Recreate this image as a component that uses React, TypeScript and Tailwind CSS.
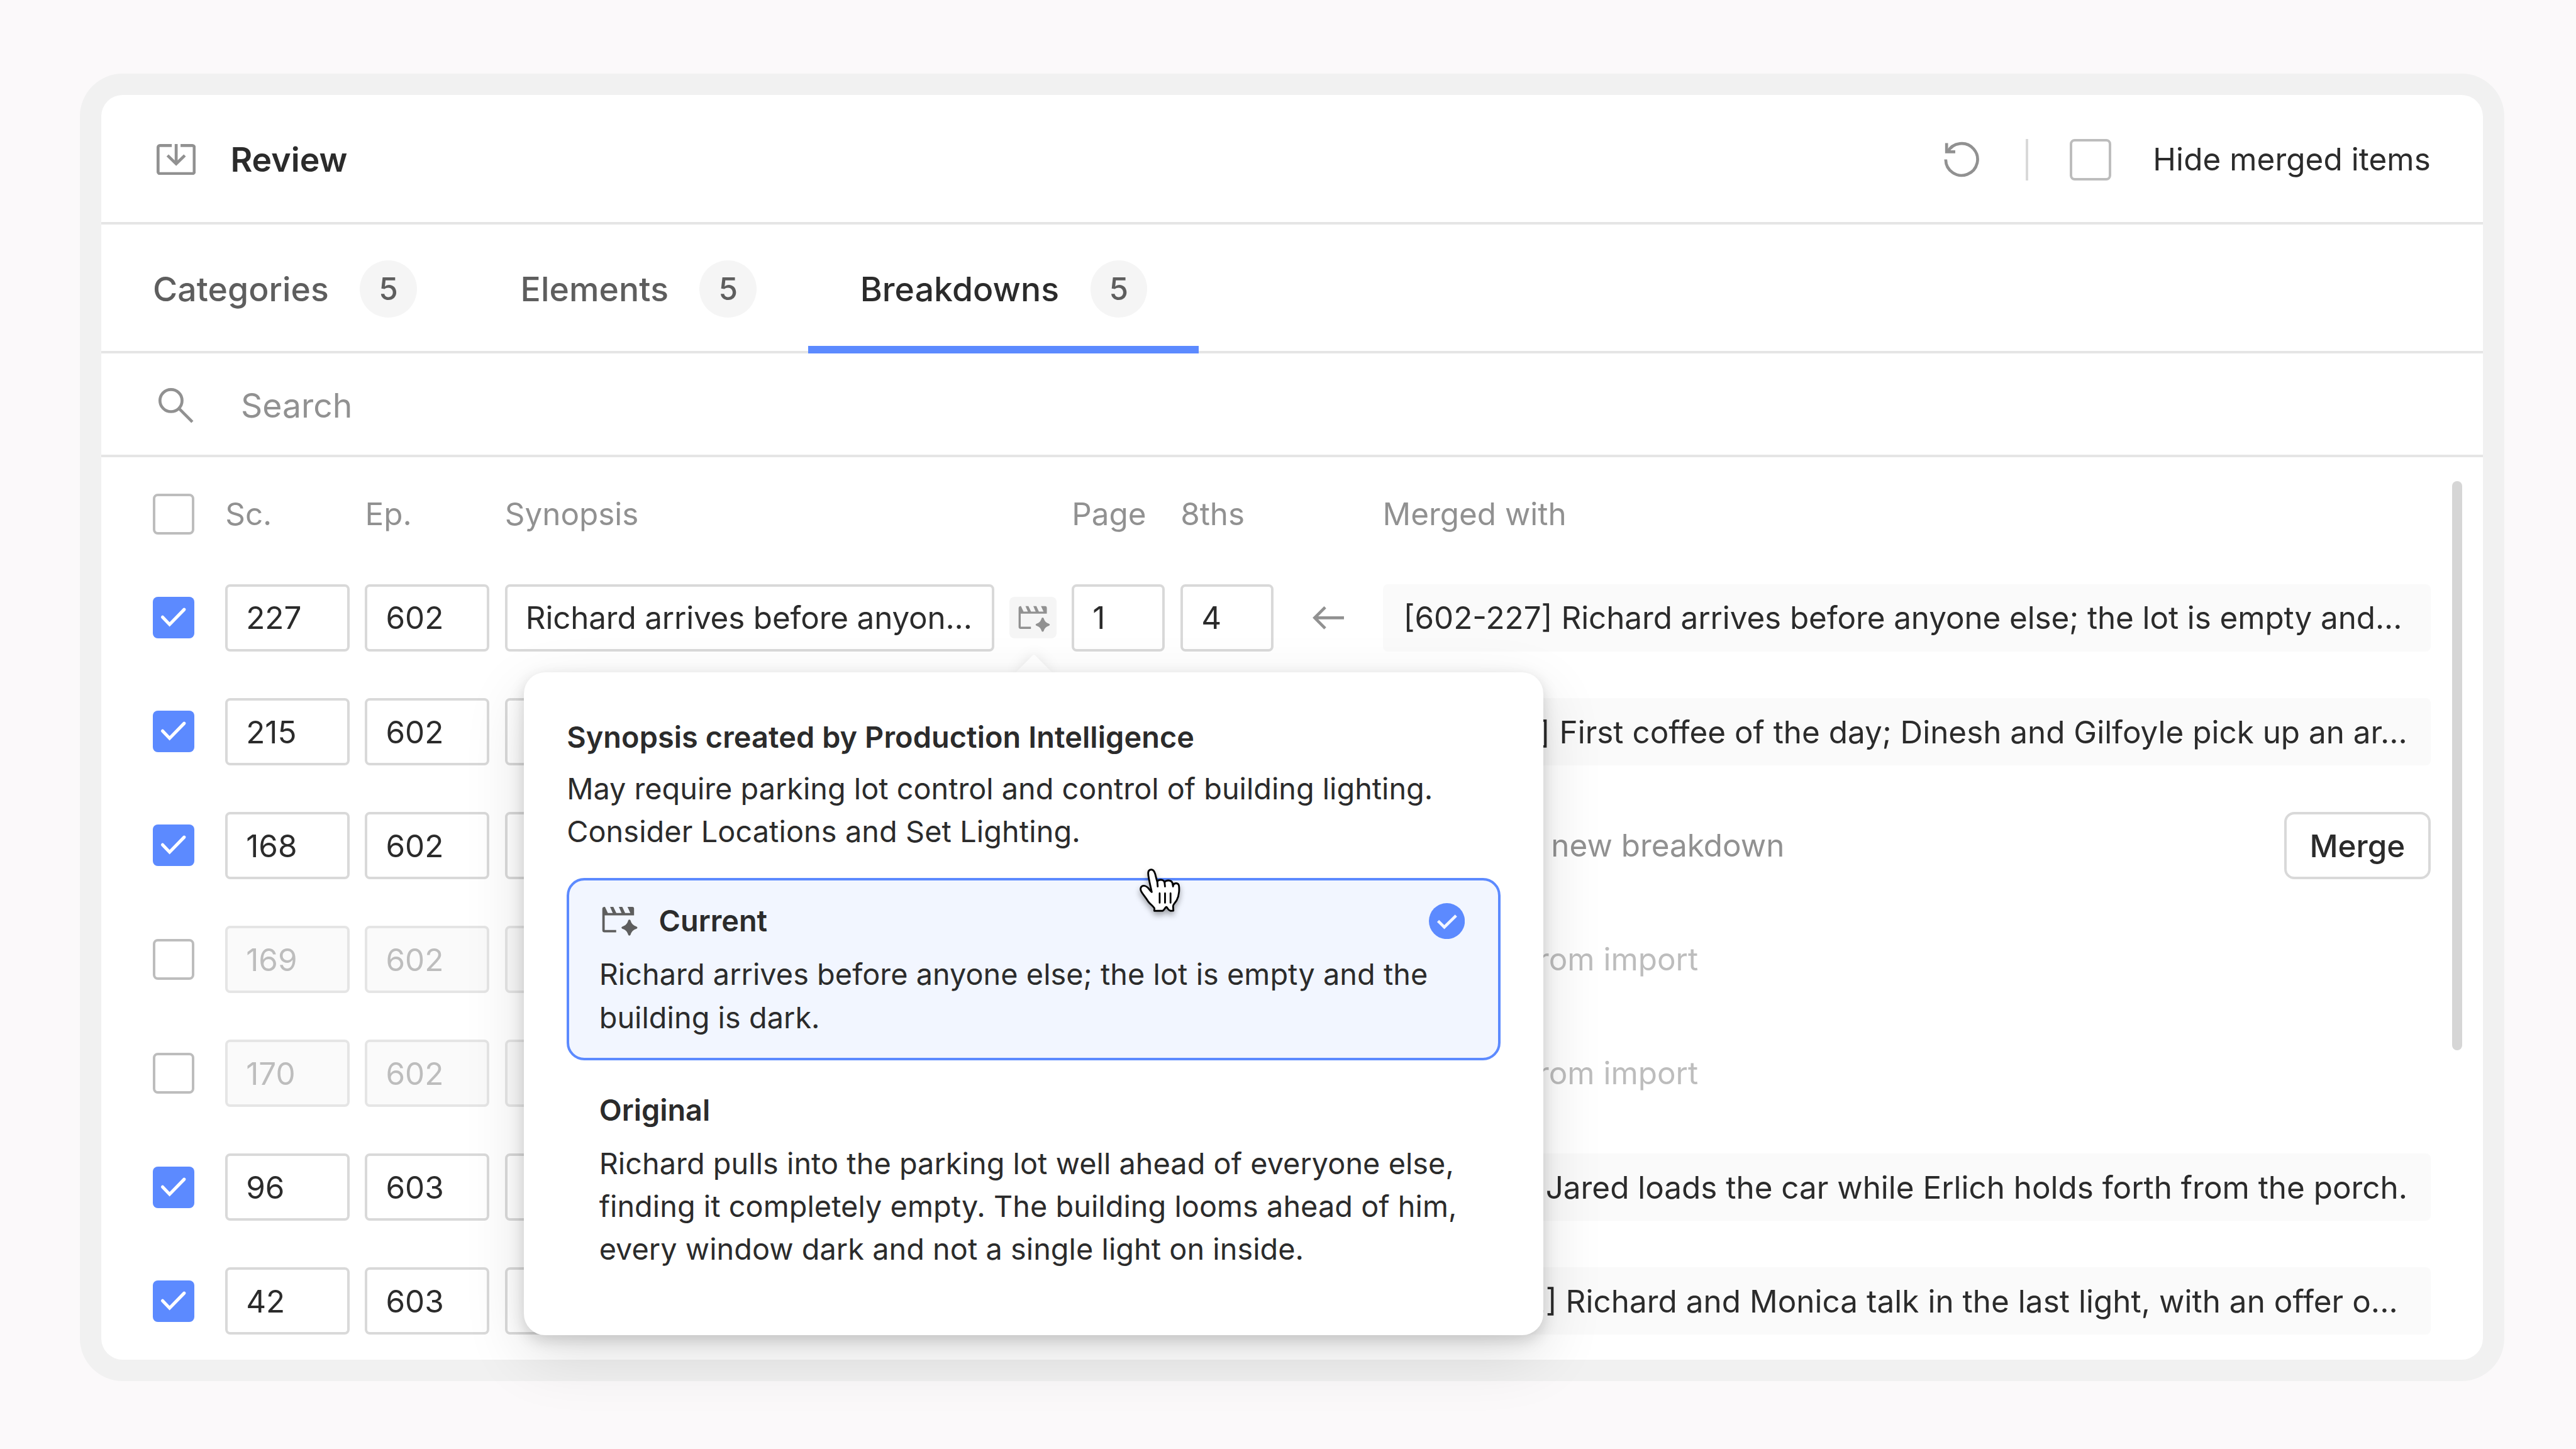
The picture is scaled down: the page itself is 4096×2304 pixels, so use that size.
import type { ReactNode } from "react";
import clsx from "clsx";

type Row = {
  scene: string;
  episode: string;
  synopsis?: string;
  page?: string;
  eighths?: string;
  checked: boolean;
  status: "merged" | "new" | "excluded";
  tag?: string;
  tagClass?: string;
  target: string;
  targetClass?: string;
};

const tabs = [
  { label: "Categories", count: 5, active: false },
  { label: "Elements", count: 5, active: false },
  { label: "Breakdowns", count: 5, active: true },
];

const rows: Row[] = [
  {
    scene: "227",
    episode: "602",
    synopsis: "Richard arrives before anyon...",
    page: "1",
    eighths: "4",
    checked: true,
    status: "merged",
    tag: "[602-227]",
    target: "Richard arrives before anyone else; the lot is empty and...",
    targetClass: "tracking-[-0.09px]",
  },
  {
    scene: "215",
    episode: "602",
    checked: true,
    status: "merged",
    tag: "[602-215]",
    tagClass: "tracking-[0.5px]",
    target: "First coffee of the day; Dinesh and Gilfoyle pick up an ar...",
  },
  {
    scene: "168",
    episode: "602",
    checked: true,
    status: "new",
    target: "Will create new breakdown",
  },
  {
    scene: "169",
    episode: "602",
    checked: false,
    status: "excluded",
    target: "Excluded from import",
  },
  {
    scene: "170",
    episode: "602",
    checked: false,
    status: "excluded",
    target: "Excluded from import",
  },
  {
    scene: "96",
    episode: "603",
    checked: true,
    status: "merged",
    tag: "[603-96]",
    target: "Jared loads the car while Erlich holds forth from the porch.",
  },
  {
    scene: "42",
    episode: "603",
    checked: true,
    status: "merged",
    tag: "[603-042]",
    target: "Richard and Monica talk in the last light, with an offer o...",
    targetClass: "tracking-[0.05px]",
  },
];

const GRID =
  "grid grid-cols-[115.3px_222.3px_222.3px_802.7px_98.8px_172.9px_321.4px_1fr] items-center pl-[82.3px] pr-[83.3px]";

function InboxIcon() {
  return (
    <svg className="h-[49.4px] w-[62.2px]" viewBox="0 0 87.5 69.5" fill="none" stroke="#919191" strokeWidth={6.6}>
      <path d="M34 3.3H7.3a4 4 0 0 0-4 4v54.9a4 4 0 0 0 4 4h72.9a4 4 0 0 0 4-4V7.3a4 4 0 0 0-4-4H53.6" />
      <path d="M43.8 0v44M24.5 25.5l19.3 18.8 19.3-18.8" />
    </svg>
  );
}

function RestartIcon() {
  return (
    <svg className="h-[59.7px] w-[59.7px]" viewBox="0 0 84 84" fill="none" stroke="#919191" strokeWidth={6.6}>
      <path d="M5.4 41.5A35.6 35.6 0 1 0 9.5 25" />
      <path d="M7.3 5v19.4h19.4" />
    </svg>
  );
}

function SearchIcon() {
  return (
    <svg className="h-[56px] w-[56px]" viewBox="0 0 79 79" fill="none" stroke="#919191" strokeWidth={6.6}>
      <circle cx={28.1} cy={28.1} r={24.8} />
      <path d="M45.8 45.8L76 76" />
    </svg>
  );
}

function ArrowLeftIcon() {
  return (
    <svg className="h-[36.7px] w-[50px]" viewBox="0 0 70.4 51.6" fill="none" stroke="#919191" strokeWidth={6.6}>
      <path d="M70.4 25.8H5M28.3 2.3L4.8 25.8l23.5 23.5" />
    </svg>
  );
}

function ClapperSparkIcon({ className }: { className?: string }) {
  return (
    <svg className={className} viewBox="48 90 240 200" fill="currentColor">
      <path d="M67 94h2l19 41h33l-18-41h22l20 41h35l-18-41h23l19 41h35l-19-41h33q11 0 11 12v45H67v98h77v16H66q-15 0-15-15V108q0-12 12-14z" />
      <path d="M232.5 180q6 0 8 6c6 21 19 34 39 40q7 3 7 8t-7 8c-20 6-33 18-39 39q-2 6-8 6t-8-6c-6-21-18-33-38-39q-7-3-7-8t7-8c20-6 32-19 38-40q2-6 8-6z" />
    </svg>
  );
}

function HandCursor() {
  return (
    <svg
      className="absolute left-[958.7px] top-[296px] h-[113.8px] w-[113.8px] overflow-visible drop-shadow-[0_5px_5px_rgba(0,0,0,0.35)]"
      viewBox="0 0 480 480"
      fill="#fff"
      stroke="#000"
      strokeWidth={12}
      strokeLinejoin="round"
      strokeLinecap="round"
    >
      <path d="M166 225C160 196 142 128 142 97C143 82 151 75 163 75C175 75 182 83 188 101C195 125 199 148 203 154C212 139 245 139 252 160C262 142 298 143 305 166L311 178C318 163 341 163 347 178C351 192 350 210 349 224C347 246 342 264 334 279C325 297 309 306 309 320L311 350L292 351C280 350 276 339 268 329Q264 323 259 329C251 339 246 350 238 351L183 351L184 334C175 320 155 306 141 287C125 261 104 238 95 220C86 201 94 184 112 183C130 182 141 196 150 208C156 216 162 222 166 225Z" />
      <path d="M203 154L206 188M252 160L255 188M305 166L309 188M219 234v63M255 234v63M292 234v63" />
    </svg>
  );
}

function Checkbox({ checked = false }: { checked?: boolean }) {
  if (!checked) {
    return <span className="block size-[65.8px] shrink-0 rounded-[8px] border-4 border-[#bdbdbd] bg-white" />;
  }
  return (
    <span className="block size-[65.8px] shrink-0 rounded-[8px] bg-[#5c8aff]">
      <svg className="size-full" viewBox="0 0 92.6 92.6" fill="none" stroke="#fff" strokeWidth={7.2} strokeLinecap="round">
        <path d="M21.8 45.5L37.5 61.8L70.2 28.3" />
      </svg>
    </span>
  );
}

function Field({ value, disabled, className }: { value?: string; disabled: boolean; className: string }) {
  return (
    <div
      className={clsx(
        "flex h-[107px] items-center overflow-hidden whitespace-nowrap rounded-[8px] border-4 pl-[29px] pt-0.5",
        disabled ? "border-[#e5e5e5] bg-[#fafafa] text-[#bdbdbd]" : "border-[#d9d9d9] bg-white",
        className
      )}
    >
      {value}
    </div>
  );
}

function Option({
  title,
  icon,
  selected = false,
  children,
}: {
  title: string;
  icon?: ReactNode;
  selected?: boolean;
  children: ReactNode;
}) {
  return (
    <div
      className={clsx(
        "rounded-[28px] border-4 pl-[47.5px] pr-[30px] py-[30.1px]",
        selected ? "border-[#5c8aff] bg-[#f2f6ff]" : "border-transparent"
      )}
    >
      <div className="mb-[16.8px] flex h-[68.2px] items-center">
        {icon}
        <span className="font-semibold">{title}</span>
        {selected && (
          <svg className="ml-auto mr-[22.8px] size-[57.2px]" viewBox="0 0 80.4 80.4" fill="none">
            <circle cx={40.2} cy={40.2} r={40.2} fill="#5c8aff" />
            <path d="M20.5 39.8L34.5 53.7L60.8 27.8" stroke="#f2f6ff" strokeWidth={6.4} />
          </svg>
        )}
      </div>
      <p className="tracking-[0.05px]">{children}</p>
    </div>
  );
}

function SynopsisPopover() {
  return (
    <div className="absolute left-[-772.2px] top-[120.2px] z-10 w-[1620.8px]">
      <svg
        className="absolute left-[781px] top-[-29.8px] h-[30.8px] w-[60px] overflow-visible drop-shadow-[0_0_10px_rgba(0,0,0,0.1)]"
        viewBox="0 0 60 30"
      >
        <path d="M0 30L28 1.5Q30 -0.5 32 1.5L60 30z" fill="#fff" />
      </svg>
      <div className="relative rounded-[34px] bg-white px-[67.9px] pb-[68.5px] pt-[68.8px] text-[46.8px] leading-[68.2px] shadow-[0_33px_99px_rgba(0,0,0,0.12),0_8px_25px_rgba(0,0,0,0.16)]">
        <h3 className="mb-[13.8px] font-semibold tracking-[0.1px]">Synopsis created by Production Intelligence</h3>
        <p className="mb-[39.8px]">
          May require parking lot control and control of building lighting.
          <br />
          <span className="tracking-[0.1px]">Consider Locations and Set Lighting.</span>
        </p>
        <div className="flex flex-col gap-[11px]">
          <Option
            title="Current"
            selected
            icon={<ClapperSparkIcon className="ml-[4.5px] mr-[33.5px] h-[47.4px] w-[56.9px] text-[#5e5e5e]" />}
          >
            Richard arrives before anyone else; the lot is empty and the
            <br />
            building is dark.
          </Option>
          <Option title="Original">
            Richard pulls into the parking lot well ahead of everyone else,
            <br />
            finding it completely empty. The building looms ahead of him,
            <br />
            every window dark and not a single light on inside.
          </Option>
        </div>
        <HandCursor />
      </div>
    </div>
  );
}

function MergedWith({ row }: { row: Row }) {
  if (row.status === "merged") {
    return (
      <div className="flex h-[107px] items-center overflow-hidden whitespace-pre rounded-[8px] bg-[#fafafa] pl-[32.9px] pt-0.5">
        <span className={row.tagClass}>{row.tag} </span>
        <span className={row.targetClass}>{row.target}</span>
      </div>
    );
  }
  return (
    <div className="flex items-center justify-between whitespace-nowrap">
      <span className={row.status === "new" ? "pl-[8px] text-[#919191]" : "text-[#bdbdbd]"}>{row.target}</span>
      {row.status === "new" && (
        <button className="flex h-[107px] w-[232.8px] items-center justify-center rounded-[16px] border-4 border-[#d9d9d9] bg-white pt-0.5 font-medium">
          Merge
        </button>
      )}
    </div>
  );
}

function BreakdownRow({ row, open }: { row: Row; open: boolean }) {
  const disabled = row.status === "excluded";
  return (
    <div className={clsx(GRID, "h-[181.1px]")}>
      <Checkbox checked={row.checked} />
      <Field value={row.scene} disabled={disabled} className="w-[197.6px]" />
      <Field value={row.episode} disabled={disabled} className="w-[197.6px]" />
      <Field value={row.synopsis} disabled={disabled} className="w-[778px] tracking-[-0.17px]" />
      <div className="relative flex h-[66px] w-[74.1px] items-center justify-center rounded-[8px] bg-[#f5f5f5] pl-1 pt-1">
        <ClapperSparkIcon className="h-[42.2px] w-[50.6px] text-[#919191]" />
        {open && <SynopsisPopover />}
      </div>
      <Field value={row.page} disabled={disabled} className="w-[148.2px]" />
      <div className="flex items-center">
        <Field value={row.eighths} disabled={disabled} className="w-[148.2px]" />
        <span className="flex flex-1 justify-center">
          <ArrowLeftIcon />
        </span>
      </div>
      <MergedWith row={row} />
    </div>
  );
}

export default function App() {
  return (
    <div className="h-[2304px] w-[4096px] overflow-hidden bg-[#fbf9fa] pl-[126.5px] pt-[116.6px] font-['Inter',sans-serif] text-[49.4px] leading-none text-[#2b2b2b]">
      <div className="h-[2079.3px] w-[3855.7px] rounded-[68px] bg-[#f1f1f1] p-[34.1px]">
        <div className="flex h-full flex-col rounded-[34px] bg-white">
          <header className="flex h-[205.9px] shrink-0 items-center border-b-4 border-[#e5e5e5] pl-[82.3px] pr-[83.3px] pt-1">
            <span className="mr-[49.4px] flex w-[74.1px] justify-center">
              <InboxIcon />
            </span>
            <h1 className="text-[53.5px] font-semibold">Review</h1>
            <div className="ml-auto flex items-center gap-[66.2px]">
              <span className="-mr-0.5 flex w-[74.1px] justify-center">
                <RestartIcon />
              </span>
              <span className="h-[65.9px] w-1 bg-[#d9d9d9]" />
              <Checkbox />
              <span className="tracking-[0.06px]">Hide merged items</span>
            </div>
          </header>

          <nav className="flex h-[205.8px] shrink-0 border-b-4 border-[#e5e5e5] text-[53.5px] font-medium tracking-[0.08px]">
            {tabs.map((tab) => (
              <div
                key={tab.label}
                className={clsx(
                  "relative flex h-[205.8px] items-center gap-[49.4px] px-[82.3px]",
                  tab.active ? "text-[#2b2b2b]" : "text-[#5e5e5e]"
                )}
              >
                {tab.label}
                <span className="flex size-[90.6px] items-center justify-center rounded-full bg-[#f5f5f5] text-[49.4px] text-[#5e5e5e]">
                  {tab.count}
                </span>
                {tab.active && <span className="absolute inset-x-0 bottom-0 h-[12.4px] bg-[#5c8aff]" />}
              </div>
            ))}
          </nav>

          <div className="flex h-[164.7px] shrink-0 items-center border-b-4 border-[#e5e5e5] pl-[82.3px] pt-1 text-[53.5px] text-[#919191]">
            <span className="mr-[65.9px] flex w-[74.1px] justify-center">
              <SearchIcon />
            </span>
            Search
          </div>

          <div className="relative pt-[16.4px]">
            <div className={clsx(GRID, "h-[148.2px] text-[#919191]")}>
              <Checkbox />
              <span>Sc.</span>
              <span>Ep.</span>
              <span>Synopsis</span>
              <span />
              <span>Page</span>
              <span>8ths</span>
              <span>Merged with</span>
            </div>
            {rows.map((row, i) => (
              <BreakdownRow key={row.scene} row={row} open={i === 0} />
            ))}
            <span className="absolute right-[33px] top-[37.5px] h-[905px] w-[16.5px] rounded-full bg-[#d6d6d6]" />
          </div>
        </div>
      </div>
    </div>
  );
}
